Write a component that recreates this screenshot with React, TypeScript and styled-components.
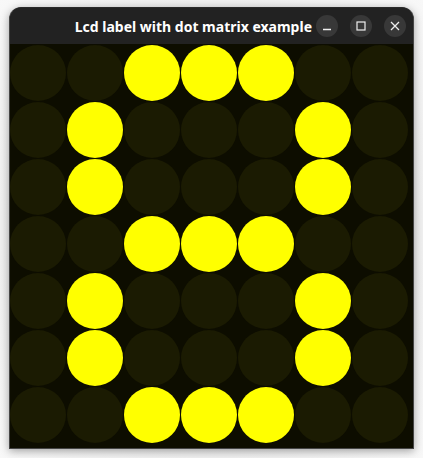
import React from "react";
import styled, { createGlobalStyle } from "styled-components";

const Global = createGlobalStyle`
  html, body { margin: 0; padding: 0; background: #f6f6f6; }
  #root { width: 423px; height: 458px; }
`;

const Page = styled.div`
  width: 423px;
  height: 458px;
  padding: 7px 0 0 9px;
  box-sizing: border-box;
  background: radial-gradient(ellipse at center, #d8d8d8 0%, #ececec 60%, #f8f8f8 100%);
`;

const Window = styled.div`
  width: 405px;
  box-sizing: border-box;
  border: 1px solid #454545;
  border-top-color: #2a2a2a;
  border-radius: 12px 12px 0 0;
  overflow: hidden;
  background: #222;
  box-shadow: 0 2px 8px rgba(0, 0, 0, 0.35);
`;

const TitleBar = styled.div`
  height: 36px;
  background: #222222;
  display: flex;
  align-items: center;
  justify-content: flex-end;
  padding-right: 7px;
  gap: 12px;
`;

const Title = styled.div`
  font-family: "Noto Sans", "Open Sans", sans-serif;
  font-weight: 700;
  font-size: 14px;
  color: #ffffff;
  margin-right: -8px;
  white-space: nowrap;
`;

const WinButton = styled.div`
  width: 22px;
  height: 22px;
  border-radius: 50%;
  background: #383838;
  display: flex;
  align-items: center;
  justify-content: center;
`;

const Matrix = styled.div`
  width: 403px;
  height: 404px;
  box-sizing: border-box;
  padding-top: 1px;
  background: #0d0d00;
  display: grid;
  grid-template-columns: repeat(7, 56px);
  grid-template-rows: repeat(7, 56px);
  column-gap: 1px;
  row-gap: 1px;
`;

const Dot = styled.div<{ $on: boolean }>`
  width: 56px;
  height: 56px;
  border-radius: 50%;
  background: ${(p) => (p.$on ? "#ffff00" : "#1b1b02")};
`;

const pattern = [
  "..XXX..",
  ".X...X.",
  ".X...X.",
  "..XXX..",
  ".X...X.",
  ".X...X.",
  "..XXX..",
];

export default function App() {
  return (
    <>
      <Global />
      <Page>
        <Window>
          <TitleBar>
            <Title>Lcd label with dot matrix example</Title>
            <WinButton>
              <svg width="10" height="10" viewBox="0 0 10 10">
                <path d="M1 8.5 H9" stroke="#eeeeee" strokeWidth="1.3" />
              </svg>
            </WinButton>
            <WinButton>
              <svg width="10" height="10" viewBox="0 0 10 10">
                <rect x="1" y="1" width="8" height="8" fill="none" stroke="#eeeeee" strokeWidth="1.2" />
              </svg>
            </WinButton>
            <WinButton>
              <svg width="10" height="10" viewBox="0 0 10 10">
                <path d="M1 1 L9 9 M9 1 L1 9" stroke="#eeeeee" strokeWidth="1.3" />
              </svg>
            </WinButton>
          </TitleBar>
          <Matrix>
            {pattern.flatMap((row, r) =>
              row.split("").map((c, i) => <Dot key={`${r}-${i}`} $on={c === "X"} />)
            )}
          </Matrix>
        </Window>
      </Page>
    </>
  );
}
